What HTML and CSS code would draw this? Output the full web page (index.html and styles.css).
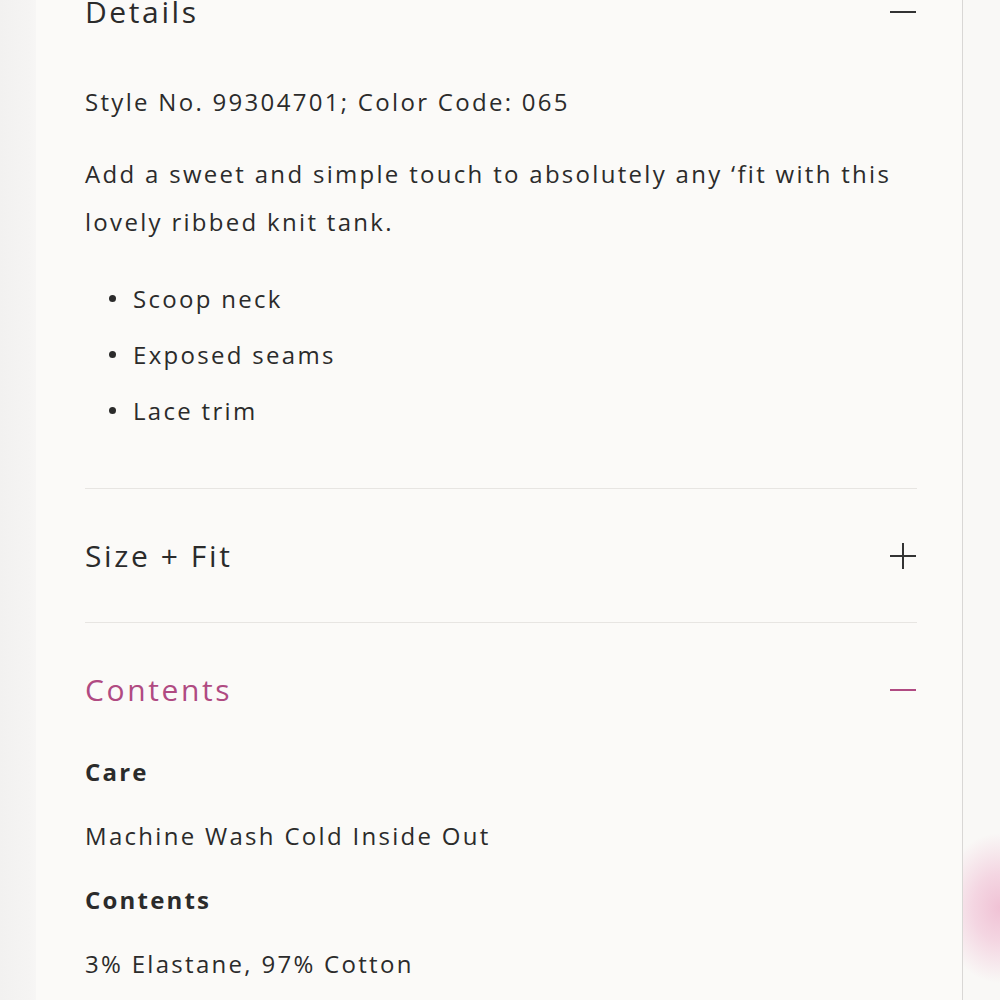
FILE: index.html
```html
<!DOCTYPE html>
<html lang="en">
<head>
  <meta charset="UTF-8">
  <meta name="viewport" content="width=device-width, initial-scale=1.0">
  <title>Ribbed Knit Tank</title>
  <link rel="stylesheet" href="styles.css">
</head>
<body>
  <div class="page">
    <aside class="gutter"></aside>

    <main class="panel">
      <div class="accordion">
        <section class="acc-item open">
          <div class="acc-head">
            <h2>Details</h2>
            <span class="toggle minus"></span>
          </div>
          <div class="acc-body">
            <p>Style No. 99304701; Color Code: 065</p>
            <p>Add a sweet and simple touch to absolutely any ‘fit with this lovely ribbed knit tank.</p>
            <ul class="bullets">
              <li>Scoop neck</li>
              <li>Exposed seams</li>
              <li>Lace trim</li>
            </ul>
          </div>
        </section>

        <section class="acc-item">
          <div class="acc-head">
            <h2>Size + Fit</h2>
            <span class="toggle plus"></span>
          </div>
        </section>

        <section class="acc-item open active">
          <div class="acc-head">
            <h2>Contents</h2>
            <span class="toggle minus"></span>
          </div>
          <div class="acc-body compact">
            <h3>Care</h3>
            <p>Machine Wash Cold Inside Out</p>
            <h3>Contents</h3>
            <p>3% Elastane, 97% Cotton</p>
          </div>
        </section>
      </div>
    </main>

    <aside class="backdrop"></aside>
  </div>
</body>
</html>
```

FILE: styles.css
```css
* {
  margin: 0;
  padding: 0;
  box-sizing: border-box;
}
html, body {
  height: 100%;
}
body {
  font-family: 'Open Sans', 'Noto Sans', sans-serif;
  color: #2b2b2b;
  background: #f3f2f1;
  overflow: hidden;
}
.page {
  display: flex;
  height: 100%;
}
.gutter {
  width: 36px;
  flex-shrink: 0;
  background: linear-gradient(90deg, #f2f1f0, #f5f4f3 80%, #f7f6f5);
}
.panel {
  width: 927px;
  flex-shrink: 0;
  background: #fbfaf8;
  border-right: 1px solid #d9d7d5;
  padding: 0 45px 0 49px;
}
.backdrop {
  flex: 1;
  background:
    radial-gradient(ellipse 60px 75px at 100% 908px, #f0c2d5 0%, #f4d6e2 45%, rgba(249,248,246,0) 100%),
    #f9f8f6;
}

/* accordion */
.accordion {
  margin-top: -56px;
}
.acc-item {
  border-top: 1px solid #e7e5e2;
}
.acc-head {
  height: 133px;
  display: flex;
  align-items: center;
  justify-content: space-between;
}
.acc-head h2 {
  font-weight: 400;
  font-size: 30px;
  letter-spacing: 2.6px;
  color: #2b2b2b;
}
.active .acc-head h2 {
  color: #b04a82;
}
.toggle {
  width: 26px;
  height: 26px;
  position: relative;
  margin-right: 1px;
}
.toggle::before,
.toggle::after {
  content: '';
  position: absolute;
  background: #333;
}
.toggle::before {
  left: 0;
  right: 0;
  top: 12px;
  height: 2px;
}
.plus::after {
  top: 0;
  bottom: 0;
  left: 12px;
  width: 2px;
}
.active .toggle::before {
  background: #b04a82;
}

.acc-body {
  padding-bottom: 50px;
  font-size: 24px;
  letter-spacing: 2.3px;
  color: #2b2b2b;
}
.acc-body p {
  line-height: 48px;
  margin-bottom: 24px;
}
.bullets {
  list-style: none;
}
.bullets li {
  display: flex;
  align-items: center;
  gap: 17px;
  height: 56px;
  padding-left: 24px;
}
.bullets li::before {
  content: '';
  width: 7px;
  height: 7px;
  border-radius: 50%;
  background: #2b2b2b;
}

.compact {
  padding-bottom: 40px;
}
.compact h3,
.compact p {
  line-height: 32px;
  margin-bottom: 32px;
}
.compact h3 {
  font-size: 24px;
  font-weight: 700;
  letter-spacing: 2.2px;
}
```
